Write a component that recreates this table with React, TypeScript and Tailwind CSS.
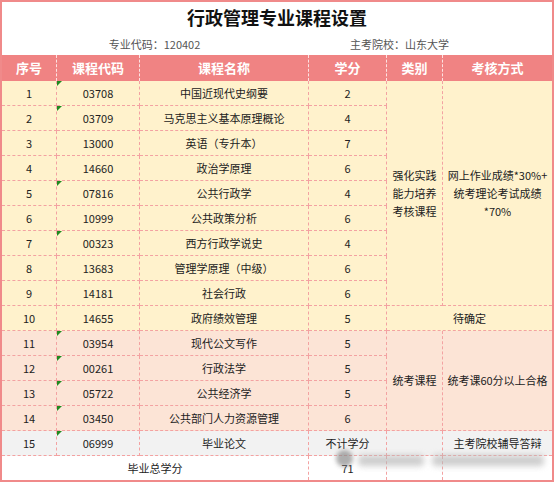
import type { ReactNode } from 'react';

type Course = { no: string; code: string; name: string; credit: string; mark?: boolean };

const courses: Course[] = [
  { no: '1', code: '03708', name: '中国近现代史纲要', credit: '2', mark: true },
  { no: '2', code: '03709', name: '马克思主义基本原理概论', credit: '4', mark: true },
  { no: '3', code: '13000', name: '英语（专升本）', credit: '7' },
  { no: '4', code: '14660', name: '政治学原理', credit: '6' },
  { no: '5', code: '07816', name: '公共行政学', credit: '4', mark: true },
  { no: '6', code: '10999', name: '公共政策分析', credit: '6' },
  { no: '7', code: '00323', name: '西方行政学说史', credit: '4', mark: true },
  { no: '8', code: '13683', name: '管理学原理（中级）', credit: '6' },
  { no: '9', code: '14181', name: '社会行政', credit: '6' },
  { no: '10', code: '14655', name: '政府绩效管理', credit: '5' },
  { no: '11', code: '03954', name: '现代公文写作', credit: '5', mark: true },
  { no: '12', code: '00261', name: '行政法学', credit: '5', mark: true },
  { no: '13', code: '05722', name: '公共经济学', credit: '5', mark: true },
  { no: '14', code: '03450', name: '公共部门人力资源管理', credit: '6', mark: true },
  { no: '15', code: '06999', name: '毕业论文', credit: '不计学分', mark: true },
];

const YELLOW = 'bg-[#fff2cc]';
const PEACH = 'bg-[#fce4d6]';
const GRAY = 'bg-[#f2f2f2]';

function bgFor(i: number) {
  if (i < 10) return YELLOW;
  if (i < 14) return PEACH;
  return GRAY;
}

function Cell({
  children,
  bg,
  last,
  className = '',
  mark,
}: {
  children?: ReactNode;
  bg: string;
  last?: boolean;
  className?: string;
  mark?: boolean;
}) {
  return (
    <div
      className={`relative flex items-center justify-center border-b border-dashed border-[#f3a2a2] text-[11px] text-[#222222] ${
        last ? '' : 'border-r'
      } ${bg} ${className}`}
    >
      {mark && (
        <span className="absolute left-0 top-0 h-0 w-0 border-t-[5px] border-r-[5px] border-t-[#1f8a1f] border-r-transparent" />
      )}
      {children}
    </div>
  );
}

function HeadCell({ children, last }: { children: ReactNode; last?: boolean }) {
  return (
    <div
      className={`flex items-center justify-center bg-[#f08383] text-[13px] font-bold text-white ${
        last ? '' : 'border-r border-dashed border-[#fde2e2]'
      }`}
    >
      {children}
    </div>
  );
}

export default function App() {
  return (
    <div className="h-[482px] w-[554px] bg-white font-['Microsoft_YaHei','Noto_Sans_CJK_SC',sans-serif]">
      <div className="relative h-[482px] w-[554px] border-2 border-[#f08a8a]">
        {/* title block */}
        <div className="h-[53px]">
          <div className="pt-[2px] text-center text-[18px] font-bold leading-[26px] text-[#111111]">
            行政管理专业课程设置
          </div>
          <div className="mt-[6px] flex text-[11px] leading-[16px] text-[#555555]">
            <div className="w-[305px] text-center">专业代码：120402</div>
            <div className="pl-[43px]">主考院校：山东大学</div>
          </div>
        </div>

        <div className="grid grid-cols-[55px_83px_169px_78px_56px_109px] grid-rows-[26px_repeat(15,25px)_24px]">
          <HeadCell>序号</HeadCell>
          <HeadCell>课程代码</HeadCell>
          <HeadCell>课程名称</HeadCell>
          <HeadCell>学分</HeadCell>
          <HeadCell>类别</HeadCell>
          <HeadCell last>考核方式</HeadCell>

          {courses.map((c, i) => {
            const bg = bgFor(i);
            return [
              <Cell key={`no${i}`} bg={bg} className="col-start-1">
                {c.no}
              </Cell>,
              <Cell key={`code${i}`} bg={bg} mark={c.mark}>
                {c.code}
              </Cell>,
              <Cell key={`name${i}`} bg={bg}>
                {c.name}
              </Cell>,
              <Cell key={`cr${i}`} bg={bg}>
                {c.credit}
              </Cell>,
              i === 0 && (
                <Cell key="cat1" bg={YELLOW} className="col-start-5 row-span-9 row-start-2 leading-[18px]">
                  <div className="text-center">
                    强化实践
                    <br />
                    能力培养
                    <br />
                    考核课程
                  </div>
                </Cell>
              ),
              i === 0 && (
                <Cell key="way1" bg={YELLOW} last className="col-start-6 row-span-9 row-start-2 leading-[18px]">
                  <div className="text-center">
                    网上作业成绩*30%+
                    <br />
                    统考理论考试成绩
                    <br />
                    *70%
                  </div>
                </Cell>
              ),
              i === 9 && (
                <Cell key="tbd" bg={YELLOW} last className="col-span-2 col-start-5">
                  待确定
                </Cell>
              ),
              i === 10 && (
                <Cell key="cat2" bg={PEACH} className="col-start-5 row-span-4 row-start-12">
                  统考课程
                </Cell>
              ),
              i === 10 && (
                <Cell key="way2" bg={PEACH} last className="col-start-6 row-span-4 row-start-12">
                  统考课60分以上合格
                </Cell>
              ),
              i === 14 && <Cell key="cat3" bg={GRAY} className="col-start-5" />,
              i === 14 && (
                <Cell key="way3" bg={GRAY} last className="col-start-6">
                  主考院校辅导答辩
                </Cell>
              ),
            ];
          })}

          <Cell bg="bg-white" className="col-span-3 col-start-1 border-b-0">
            毕业总学分
          </Cell>
          <Cell bg="bg-white" className="border-b-0">
            71
          </Cell>
          <Cell bg="bg-white" className="border-b-0" />
          <Cell bg="bg-white" last className="border-b-0" />
        </div>

        {/* blurred watermark over the bottom rows */}
        <div className="pointer-events-none absolute left-[334px] top-[448px] h-[17px] w-[17px] rounded-full bg-[#8c8c8c] opacity-70 blur-[2px]" />
        <div className="pointer-events-none absolute left-[356px] top-[453px] h-[11px] w-[66px] rounded-sm bg-[#b8b8b8] opacity-70 blur-[3px]" />
        <div className="pointer-events-none absolute left-[430px] top-[453px] h-[11px] w-[112px] rounded-sm bg-[#b8b8b8] opacity-70 blur-[3px]" />
      </div>
    </div>
  );
}
